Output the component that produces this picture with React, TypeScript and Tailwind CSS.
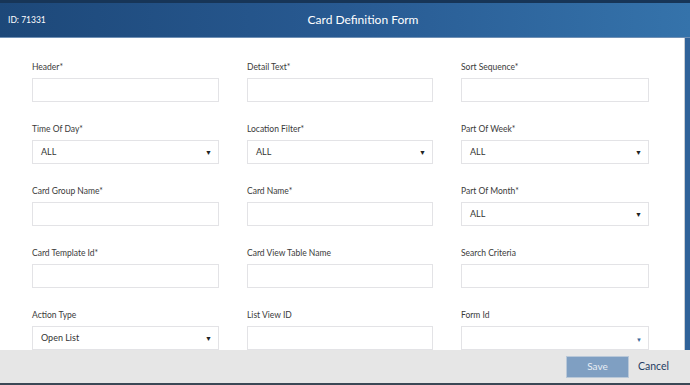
import type { ReactNode } from "react";

type Field = {
  label: string;
  kind: "text" | "select";
  value?: string;
  arrow?: "dark" | "blue";
};

const fields: Field[] = [
  { label: "Header*", kind: "text" },
  { label: "Detail Text*", kind: "text" },
  { label: "Sort Sequence*", kind: "text" },
  { label: "Time Of Day*", kind: "select", value: "ALL" },
  { label: "Location Filter*", kind: "select", value: "ALL" },
  { label: "Part Of Week*", kind: "select", value: "ALL" },
  { label: "Card Group Name*", kind: "text" },
  { label: "Card Name*", kind: "text" },
  { label: "Part Of Month*", kind: "select", value: "ALL" },
  { label: "Card Template Id*", kind: "text" },
  { label: "Card View Table Name", kind: "text" },
  { label: "Search Criteria", kind: "text" },
  { label: "Action Type", kind: "select", value: "Open List" },
  { label: "List View ID", kind: "text" },
  { label: "Form Id", kind: "select", value: "", arrow: "blue" },
];

function Box({ children }: { children?: ReactNode }) {
  return (
    <div className="flex h-[24px] items-center border border-[#e3e3e6] bg-white pl-[8px] pr-[6px] text-[9px] text-[#333]">
      {children}
    </div>
  );
}

function FormField({ field }: { field: Field }) {
  return (
    <div className="flex flex-col">
      <label className="h-[14px] text-[8.5px] leading-[14px] text-[#3a3a3a]">{field.label}</label>
      <div className="mt-[4px]">
        {field.kind === "text" ? (
          <Box />
        ) : (
          <Box>
            <span className="flex-1">{field.value}</span>
            {field.arrow === "blue" ? (
              <span className="mt-[2px] text-[6px] text-[#3d6a9a]">▼</span>
            ) : (
              <span className="text-[7px] text-[#222]">▼</span>
            )}
          </Box>
        )}
      </div>
    </div>
  );
}

export default function App() {
  return (
    <div
      className="flex h-[385px] w-[690px] flex-col overflow-hidden bg-white"
      style={{ fontFamily: "Lato, 'Open Sans', sans-serif" }}
    >
      <div className="h-[3px] bg-[#173557]" />
      <header className="relative flex h-[35px] items-center border-b border-[#6f90b5] bg-gradient-to-r from-[#1d4879] via-[#285a92] to-[#3573ab] px-[8px]">
        <span className="text-[8.5px] text-white">ID: 71331</span>
        <h1 className="absolute left-[36px] right-0 text-center text-[12px] text-white">
          Card Definition Form
        </h1>
      </header>
      <div className="flex min-h-0 flex-1">
        <main className="min-h-0 flex-1 overflow-hidden border-r border-[#c9cdd2] pl-[32px] pt-[22px]">
          <div className="grid grid-cols-[187px_186px_188px] gap-x-[28px] gap-y-[20px]">
            {fields.map((f) => (
              <FormField key={f.label} field={f} />
            ))}
          </div>
        </main>
        <div className="w-[5px] bg-[#2f6299]" />
      </div>
      <footer className="flex h-[35px] items-center justify-end border-b-2 border-[#3b4856] bg-[#e6e6e6] pr-[21px]">
        <button className="h-[22px] w-[63px] border border-[#b9c8d8] bg-[#7f9fc2] text-[10px] text-[#e8eef5]">
          Save
        </button>
        <button className="ml-[9px] text-[10.5px] text-[#1f3d63]">Cancel</button>
      </footer>
    </div>
  );
}
